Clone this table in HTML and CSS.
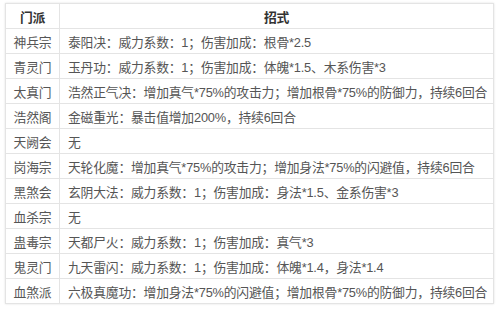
FILE: index.html
```html
<html>
<head>
    <title>门派招式</title>
    <link rel="stylesheet" href="styles.css">
</head>
<body>
    <table class="skill-table">
        <colgroup><col class="sect-col"><col></colgroup>
        <thead>
            <tr><th>门派</th><th>招式</th></tr>
        </thead>
        <tbody>
            <tr><td class="sect">神兵宗</td><td>泰阳决：威力系数：1；伤害加成：根骨*2.5</td></tr>
            <tr><td class="sect">青灵门</td><td>玉丹功：威力系数：1；伤害加成：体魄*1.5、木系伤害*3</td></tr>
            <tr><td class="sect">太真门</td><td>浩然正气决：增加真气*75%的攻击力；增加根骨*75%的防御力，持续6回合</td></tr>
            <tr><td class="sect">浩然阁</td><td>金磁重光：暴击值增加200%，持续6回合</td></tr>
            <tr><td class="sect">天阙会</td><td>无</td></tr>
            <tr><td class="sect">岗海宗</td><td>天轮化魔：增加真气*75%的攻击力；增加身法*75%的闪避值，持续6回合</td></tr>
            <tr><td class="sect">黑煞会</td><td>玄阴大法：威力系数：1；伤害加成：身法*1.5、金系伤害*3</td></tr>
            <tr><td class="sect">血杀宗</td><td>无</td></tr>
            <tr><td class="sect">蛊毒宗</td><td>天都尸火：威力系数：1；伤害加成：真气*3</td></tr>
            <tr><td class="sect">鬼灵门</td><td>九天雷闪：威力系数：1；伤害加成：体魄*1.4，身法*1.4</td></tr>
            <tr><td class="sect">血煞派</td><td>六极真魔功：增加身法*75%的闪避值；增加根骨*75%的防御力，持续6回合</td></tr>
        </tbody>
    </table>
</body>
</html>
```

FILE: styles.css
```css
body { margin: 0; padding: 3px 6px 0 5px; background: #fff; font-family: "Liberation Sans", "Noto Sans CJK SC", sans-serif; }
.skill-table { width: 489px; table-layout: fixed; border-collapse: collapse; font-size: 12.8px; letter-spacing: -0.2px; color: #555; box-shadow: 0 0 2px rgba(0, 0, 0, 0.12); }
.sect-col { width: 54px; }
.skill-table th, .skill-table td { border: 1px solid #e4e4e4; height: 25px; padding: 0 0 0 8px; text-align: left; white-space: nowrap; overflow: hidden; }
.skill-table th { color: #333; font-weight: bold; text-align: center; padding: 0; }
.skill-table .sect { text-align: center; padding: 0; }
```
